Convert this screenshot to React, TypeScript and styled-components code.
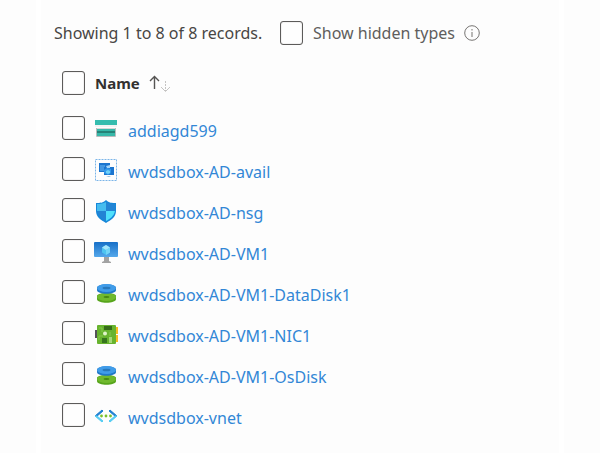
import React, { useState } from "react";
import styled, { createGlobalStyle } from "styled-components";

const GlobalStyle = createGlobalStyle`
  * { box-sizing: border-box; }
  body {
    margin: 0;
    background: #fdfdfd;
    color: #484644;
    font-family: "Noto Sans", "Open Sans", sans-serif;
    font-size: 16px;
    line-height: 20px;
  }
`;

const Panel = styled.main`
  min-height: 100vh;
  margin: 0 36px;
  padding: 21px 13px 0;
  border: solid #ffffff;
  border-width: 0 5px;
`;

const Toolbar = styled.header`
  display: flex;
  align-items: center;
  height: 24px;
`;

const Summary = styled.span`
  width: 226px;
  white-space: nowrap;
`;

const ToggleLabel = styled.label`
  display: flex;
  align-items: center;
  gap: 10px;
  color: #605e5c;
  white-space: nowrap;
`;

const Checkbox = styled.input.attrs({ type: "checkbox" })`
  appearance: none;
  display: block;
  flex: none;
  width: 23px;
  height: 24px;
  margin: 0;
  border: 1px solid #5c5b5a;
  border-radius: 3px;
  background: #fefefe;
  box-shadow: inset 0 0 1px #8a8886;

  &:checked {
    background: #0078d4;
    border-color: #0078d4;
  }
`;

const IconButton = styled.button`
  display: flex;
  margin: 0 0 0 9px;
  padding: 0;
  border: 0;
  background: none;
`;

const Table = styled.table`
  width: 100%;
  margin-top: 26px;
  border-collapse: collapse;
  table-layout: fixed;
`;

const HeaderRow = styled.tr`
  height: 45px;
`;

const Row = styled.tr`
  height: 41px;
`;

const HeaderCell = styled.th`
  padding: 0;
  text-align: left;
  vertical-align: top;
`;

const CheckHeader = styled(HeaderCell)`
  width: 40px;
  padding-left: 8px;
`;

const IconHeader = styled(HeaderCell)`
  width: 34px;
  padding-left: 1px;
`;

const SortButton = styled.button`
  display: flex;
  align-items: center;
  gap: 9px;
  height: 24px;
  padding: 0;
  border: 0;
  background: none;
  color: #323130;
  font: inherit;
  font-size: 15px;
  font-weight: 700;
`;

const Cell = styled.td`
  padding: 0;
  vertical-align: top;
`;

const CheckCell = styled(Cell)`
  padding-left: 8px;
`;

const IconCell = styled(Cell)`
  padding-top: 1px;

  svg { display: block; }
`;

const NameCell = styled(Cell)`
  padding-top: 5px;
`;

const ResourceLink = styled.a`
  color: #3287d6;
  text-decoration: none;
  white-space: nowrap;

  &:hover { text-decoration: underline; }
`;

type Kind = "storage" | "availability" | "security" | "machine" | "disk" | "network" | "vnet";

const drawings: Record<Kind, React.ReactNode> = {
  storage: (
    <>
      <rect x="1" y="3" width="22" height="5" fill="#35bcae" />
      <rect x="1" y="8" width="22" height="2" fill="#f3f3f3" />
      <path d="M2 11.500h20" stroke="#d5d8d8" />
      <rect x="3" y="12" width="18" height="7" fill="#37b8a9" />
      <rect x="3" y="14" width="18" height="2" fill="#258277" />
      <path d="M2.500 11v8.500h19V11" fill="none" stroke="#b9bcbc" />
    </>
  ),
  availability: (
    <>
      <rect x="1.500" y="1.500" width="21" height="21" fill="none" stroke="#7bb5e8" strokeDasharray="2 1" />
      <rect x="5" y="5" width="11" height="9" fill="#1b75cf" />
      <rect x="6" y="7" width="5" height="6" fill="#4397e2" />
      <rect x="10" y="9" width="10" height="8" fill="#1b75cf" />
      <path d="M12 8l4-1v3h-3z" fill="#a8d5f7" />
      <path d="M10 12l3-2 4 1v4l-3 2-4-2z" fill="#3399eb" />
      <path d="M12 13l2-1 2 1v2l-2 1-2-1z" fill="#6ed0f7" />
      <path d="M12 18h5l-2 1z" fill="#91b9d8" />
    </>
  ),
  security: (
    <>
      <path d="M12 1c3 3 6 3 10 3v8c0 6-5 9-10 12C7 21 2 18 2 12V4c4 0 7 0 10-3z" fill="#1687d9" />
      <path d="M12 3v9H3V5c4 0 6-.5 9-2z" fill="#45bcef" />
      <path d="M12 3c3 1.500 5 2 9 2v7h-9z" fill="#2384d4" />
      <path d="M3 12h9v10c-4-2-8-5-9-10z" fill="#2384d4" />
      <path d="M12 12h9c-1 5-5 8-9 10z" fill="#4fe0fc" />
    </>
  ),
  machine: (
    <>
      <defs>
        <linearGradient id="screen" x2="0" y2="1">
          <stop stopColor="#176fc7" />
          <stop offset="1" stopColor="#55a8eb" />
        </linearGradient>
      </defs>
      <rect y="2" width="24" height="15" rx="1" fill="url(#screen)" />
      <path d="M12 5l4 2.500v5L12 15l-4-2.500v-5z" fill="#4fc4f0" />
      <path d="M12 5l4 2.500-4 2.500-4-2.500z" fill="#a5e5fb" />
      <path d="M12 10l4-2.500v5L12 15z" fill="#73d5f7" />
      <path d="M10 17h5v4l2 1v1H8v-1l2-1z" fill="#a3a3a3" />
    </>
  ),
  disk: (
    <>
      <path d="M3 15c0-4 19-4 19 0v3c0 5-19 5-19 0z" fill="#57a51c" />
      <ellipse cx="12.500" cy="16" rx="9.500" ry="4" fill="#70b92d" />
      <ellipse cx="12.500" cy="16" rx="3" ry="1" fill="#448712" />
      <path d="M3 7c0-5 19-5 19 0v2c0 5-19 5-19 0z" fill="#2078c8" />
      <ellipse cx="12.500" cy="7" rx="9.500" ry="4" fill="#409ce9" />
      <ellipse cx="12.500" cy="7" rx="4" ry="1.300" fill="#2878bb" />
    </>
  ),
  network: (
    <>
      <rect x="1" y="8" width="4" height="8" fill="#55535a" />
      <rect x="21" y="5" width="3" height="7" fill="#f6bd22" />
      <rect x="21" y="13" width="3" height="7" fill="#f6bd22" />
      <rect x="3" y="3" width="19" height="19" rx="1" fill="#67b32e" />
      <rect x="10" y="4" width="8" height="4" fill="#356c18" />
      <path d="M5 6h3v4M16 10v4M5 18v-4h4" fill="none" stroke="#86c84c" />
      <circle cx="11" cy="11.500" r="2" fill="#e0f4c8" />
      <rect x="8" y="16" width="5" height="5" fill="#36751d" />
      <rect x="15" y="15" width="3" height="6" fill="#a5d97a" />
    </>
  ),
  vnet: (
    <>
      <path d="M8 6l-7 6 1 1 7-6zM16 6l7 6-1 1-7-6z" fill="#1e7fd1" stroke="#1e7fd1" />
      <path d="M1 12l7 6 1-1-6-5zM23 12l-7 6-1-1 6-5z" fill="#56cdf3" stroke="#56cdf3" />
      <circle cx="7.500" cy="12" r="1.400" fill="#7bc12d" />
      <circle cx="12" cy="12" r="1.400" fill="#7bc12d" />
      <circle cx="16.500" cy="12" r="1.400" fill="#7bc12d" />
    </>
  ),
};

const ResourceIcon = ({ kind }: { kind: Kind }) => (
  <svg width="24" height="24" viewBox="0 0 24 24" aria-hidden="true">
    {drawings[kind]}
  </svg>
);

const SortIcon = () => (
  <svg width="22" height="20" viewBox="0 0 22 20" fill="none" aria-hidden="true">
    <path d="M5.500 16V4M1 8l4.500-4.500L10 8" stroke="#555453" strokeWidth="1.400" />
    <path d="M16.500 8v10" stroke="#c5c4c3" strokeDasharray="2 1" />
    <path d="M12 14l4.500 4.500L21 14" stroke="#c5c4c3" />
  </svg>
);

const InfoIcon = () => (
  <svg width="16" height="16" viewBox="0 0 16 16" fill="none" aria-hidden="true">
    <circle cx="8" cy="8" r="7.300" stroke="#777573" />
    <path d="M8 7v5M8 4v1.500" stroke="#969492" strokeWidth="1.300" />
  </svg>
);

const resources: { name: string; kind: Kind }[] = [
  { name: "addiagd599", kind: "storage" },
  { name: "wvdsdbox-AD-avail", kind: "availability" },
  { name: "wvdsdbox-AD-nsg", kind: "security" },
  { name: "wvdsdbox-AD-VM1", kind: "machine" },
  { name: "wvdsdbox-AD-VM1-DataDisk1", kind: "disk" },
  { name: "wvdsdbox-AD-VM1-NIC1", kind: "network" },
  { name: "wvdsdbox-AD-VM1-OsDisk", kind: "disk" },
  { name: "wvdsdbox-vnet", kind: "vnet" },
];

export default function App() {
  const [selected, setSelected] = useState<string[]>([]);
  const allSelected = selected.length === resources.length;

  const toggle = (name: string) =>
    setSelected((current) =>
      current.includes(name) ? current.filter((item) => item !== name) : [...current, name]
    );

  return (
    <>
      <GlobalStyle />
      <Panel>
        <Toolbar>
          <Summary>Showing 1 to 8 of 8 records.</Summary>
          <ToggleLabel>
            <Checkbox />
            Show hidden types
          </ToggleLabel>
          <IconButton type="button" aria-label="About hidden types">
            <InfoIcon />
          </IconButton>
        </Toolbar>
        <Table>
          <thead>
            <HeaderRow>
              <CheckHeader>
                <Checkbox
                  aria-label="Select all"
                  checked={allSelected}
                  onChange={() => setSelected(allSelected ? [] : resources.map((r) => r.name))}
                />
              </CheckHeader>
              <IconHeader>
                <SortButton type="button">
                  Name
                  <SortIcon />
                </SortButton>
              </IconHeader>
              <HeaderCell as="td" />
            </HeaderRow>
          </thead>
          <tbody>
            {resources.map(({ name, kind }) => (
              <Row key={name}>
                <CheckCell>
                  <Checkbox
                    aria-label={`Select ${name}`}
                    checked={selected.includes(name)}
                    onChange={() => toggle(name)}
                  />
                </CheckCell>
                <IconCell>
                  <ResourceIcon kind={kind} />
                </IconCell>
                <NameCell>
                  <ResourceLink href={`#${name}`}>{name}</ResourceLink>
                </NameCell>
              </Row>
            ))}
          </tbody>
        </Table>
      </Panel>
    </>
  );
}
